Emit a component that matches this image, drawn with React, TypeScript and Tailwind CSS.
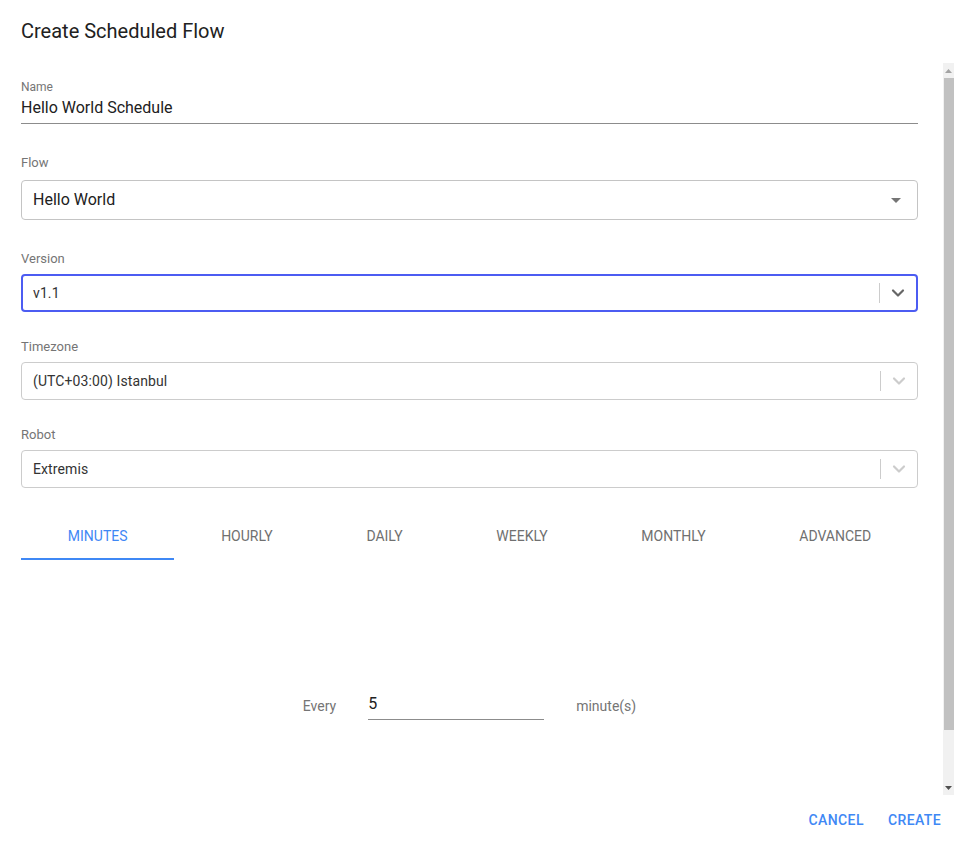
import { ChevronDown } from 'lucide-react'

const tabs = ['Minutes', 'Hourly', 'Daily', 'Weekly', 'Monthly', 'Advanced']

function SelectBox({ value, focused }: { value: string; focused?: boolean }) {
  return (
    <div
      className={
        focused
          ? 'flex h-[38px] items-center rounded-[4px] border-2 border-[#4c5cf2] pl-[10px]'
          : 'flex h-[38px] items-center rounded-[4px] border border-[#cccccc] pl-[11px]'
      }
    >
      <span className="flex-1 text-[14px] tracking-[0.1px] text-[#333333]">{value}</span>
      <span className="h-[20px] w-px bg-[#cccccc]" />
      <span className={focused ? 'flex w-[36px] justify-center text-[#666666]' : 'flex w-[36px] justify-center text-[#cccccc]'}>
        <ChevronDown size={20} strokeWidth={2.6} />
      </span>
    </div>
  )
}

export default function App() {
  return (
    <div className="flex h-[843px] w-[954px] flex-col bg-white font-['Roboto',sans-serif] text-[#212121]">
      {/* header */}
      <div className="h-[63px] px-[21px] pt-[19px]">
        <h2 className="text-[20px] leading-[24px] text-[#212121]">Create Scheduled Flow</h2>
      </div>

      <div className="flex h-[732px]">
        <div className="flex-1 pl-[21px] pr-[25px]">
          {/* Name */}
          <div className="mt-[17px] border-b border-[#8c8c8c] pb-[6px]">
            <p className="text-[12px] leading-[14px] text-[#757575]">Name</p>
            <p className="mt-[4px] text-[16px] leading-[19px]">Hello World Schedule</p>
          </div>

          {/* Flow */}
          <p className="mt-[31px] text-[13px] leading-[16px] text-[#757575]">Flow</p>
          <div className="mt-[9px] flex h-[40px] items-center rounded-[4px] border border-[#c4c4c4] pl-[11px] pr-[16px]">
            <span className="flex-1 text-[16px] text-[#212121]">Hello World</span>
            <svg width="10" height="5" viewBox="0 0 10 5">
              <path d="M0 0h10L5 5z" fill="#757575" />
            </svg>
          </div>

          {/* Version */}
          <p className="mt-[31px] text-[13px] leading-[16px] text-[#757575]">Version</p>
          <div className="mt-[7px]">
            <SelectBox value="v1.1" focused />
          </div>

          {/* Timezone */}
          <p className="mt-[27px] text-[13px] leading-[16px] text-[#757575]">Timezone</p>
          <div className="mt-[7px]">
            <SelectBox value="(UTC+03:00) Istanbul" />
          </div>

          {/* Robot */}
          <p className="mt-[27px] text-[13px] leading-[16px] text-[#757575]">Robot</p>
          <div className="mt-[7px]">
            <SelectBox value="Extremis" />
          </div>

          {/* tabs */}
          <div className="mt-[24px] flex h-[48px]">
            {tabs.map((t, i) => (
              <div
                key={t}
                className={
                  i === 0
                    ? 'flex flex-auto items-center justify-center border-b-2 border-[#3f88f5] px-[45px] pt-[2px] text-[14px] uppercase text-[#3f88f5]'
                    : 'flex flex-auto items-center justify-center border-b-2 border-transparent px-[45px] pt-[2px] text-[14px] uppercase text-[#707070]'
                }
              >
                {t}
              </div>
            ))}
          </div>

          {/* every */}
          <div className="mt-[129px] flex items-center justify-center">
            <span className="pt-[4px] text-[14px] text-[#757575]">Every</span>
            <div className="ml-[32px] h-[31px] w-[176px] border-b border-[#8c8c8c] pt-[5px] text-[16px] leading-[19px]">5</div>
            <span className="ml-[32px] pt-[4px] text-[14px] text-[#757575]">minute(s)</span>
          </div>
        </div>

        {/* scrollbar */}
        <div className="flex w-[11px] flex-col bg-[#f1f1f1]">
          <div className="flex h-[15px] items-center justify-center">
            <svg width="7" height="4" viewBox="0 0 7 4">
              <path d="M0 4L3.5 0L7 4z" fill="#a3a3a3" />
            </svg>
          </div>
          <div className="ml-[1px] h-[652px] bg-[#c1c1c1]" />
          <div className="flex-1" />
          <div className="flex h-[15px] items-center justify-center">
            <svg width="7" height="4" viewBox="0 0 7 4">
              <path d="M0 0L3.5 4L7 0z" fill="#505050" />
            </svg>
          </div>
        </div>
      </div>

      {/* footer */}
      <div className="flex flex-1 items-center justify-end pr-[5px] pt-[3px]">
        <button className="px-[8px] py-[6px] text-[14px] font-medium uppercase tracking-[0.4px] text-[#3f88f5]">Cancel</button>
        <button className="ml-[8px] px-[8px] py-[6px] text-[14px] font-medium uppercase tracking-[0.4px] text-[#3f88f5]">Create</button>
      </div>
    </div>
  )
}
